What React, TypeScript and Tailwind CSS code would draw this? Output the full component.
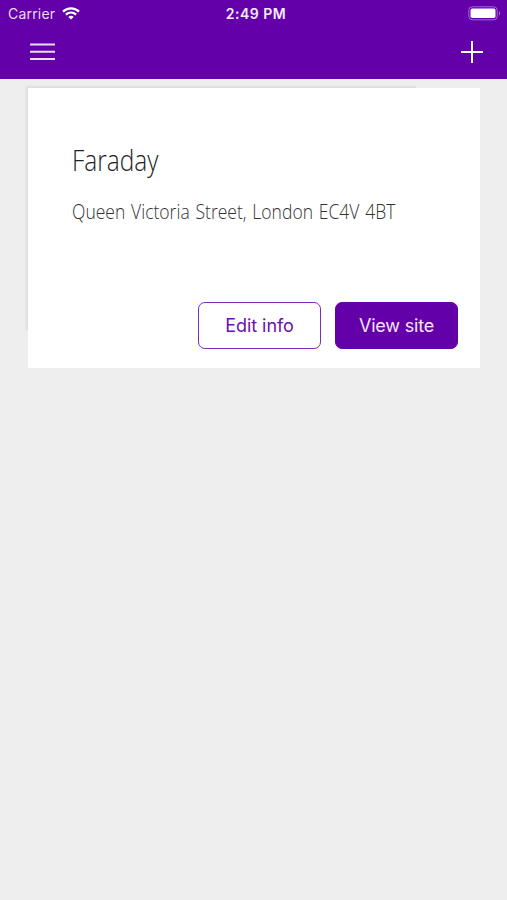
import { ReactNode } from "react";

interface ActionButtonProps {
  variant: "outline" | "solid";
  children: ReactNode;
}

function ActionButton({ variant, children }: ActionButtonProps) {
  return (
    <button
      className={
        variant === "solid"
          ? "h-[47px] w-[123px] rounded-[7px] border border-[#6400aa] bg-[#6400aa] text-[18px] tracking-[-0.2px] text-[#f3e6fb]"
          : "h-[47px] w-[123px] rounded-[7px] border-[1.5px] border-[#7a2bb8] bg-white text-[18px] tracking-[-0.05px] text-[#6c10b0]"
      }
    >
      {children}
    </button>
  );
}

function WifiIcon() {
  return (
    <svg width="18" height="13" viewBox="0 0 18 13" fill="none" stroke="#fff" strokeWidth="2.3">
      <path d="M1 4.7C5.6.3 12.4.3 17 4.7" />
      <path d="M3.9 7.7c3-2.8 7.2-2.8 10.2 0" />
      <path d="M9 12.4 6.3 9.9c1.6-1.4 3.8-1.4 5.4 0z" fill="#fff" stroke="none" />
    </svg>
  );
}

function BatteryIcon() {
  return (
    <svg width="33" height="15" viewBox="0 0 33 15">
      <rect x="0.8" y="0.8" width="28.4" height="13" rx="3.6" fill="none" stroke="#a468d0" strokeWidth="1" />
      <rect x="2.5" y="2.6" width="25" height="9.4" rx="1.8" fill="#fff" />
      <path d="M31 5.2c1.7.6 1.7 3.6 0 4.2z" fill="#a468d0" />
    </svg>
  );
}

function StatusBar() {
  return (
    <div className="grid h-[27px] grid-cols-3 items-center pl-[8px] pr-[6px] text-white">
      <div className="flex items-center gap-[7px]">
        <span className="text-[14px] tracking-[0.2px] text-[#ecdcf7]">Carrier</span>
        <WifiIcon />
      </div>
      <span className="pl-[3px] text-center text-[14px] font-semibold tracking-[0.5px] text-[#f6edfc]">2:49 PM</span>
      <div className="flex justify-end">
        <BatteryIcon />
      </div>
    </div>
  );
}

export default function App() {
  return (
    <div className="h-[900px] w-[507px] overflow-hidden bg-[#eeeeee] font-['Inter',sans-serif]">
      <header className="h-[79px] bg-[#6400aa]">
        <StatusBar />
        <div className="flex h-[50px] items-center justify-between pl-[30px] pr-[24px]">
          <button aria-label="Menu">
            <svg width="25" height="18" viewBox="0 0 25 18" stroke="#eddcf8" strokeWidth="2">
              <path d="M0 1.5h25M0 8.8h25M0 16h25" />
            </svg>
          </button>
          <button aria-label="Add site">
            <svg width="22" height="22" viewBox="0 0 22 22" stroke="#fff" strokeWidth="2">
              <path d="M11 0v22M0 11h22" />
            </svg>
          </button>
        </div>
      </header>

      <div className="relative mt-[9px] ml-[28px] h-[280px] w-[452px]">
        <div className="absolute -top-[2px] -left-[2px] h-[244px] w-[390px] bg-[#e0e0e0] shadow-[0_0_3px_rgba(0,0,0,0.06)]" />
        <div className="relative flex h-full flex-col bg-white pt-[50px] pr-[22px] pb-[19px] pl-[44px]">
          <h2 className="h-[44px] origin-left scale-x-[0.815] self-start font-['Open_Sans',sans-serif] text-[30px] leading-[44px] font-light whitespace-nowrap text-[#222]">
            Faraday
          </h2>
          <p className="mt-[14px] h-[30px] origin-left scale-x-[0.834] self-start font-['Open_Sans',sans-serif] text-[21px] leading-[30px] font-light whitespace-nowrap text-[#333] [word-spacing:1.5px]">
            Queen Victoria Street, London EC4V 4BT
          </p>
          <div className="mt-auto flex justify-end gap-[14px]">
            <ActionButton variant="outline">Edit info</ActionButton>
            <ActionButton variant="solid">View site</ActionButton>
          </div>
        </div>
      </div>
    </div>
  );
}
